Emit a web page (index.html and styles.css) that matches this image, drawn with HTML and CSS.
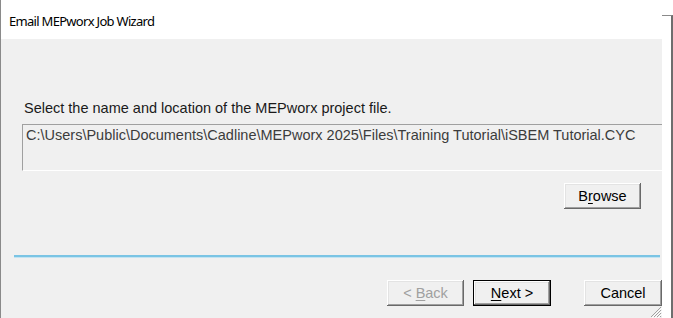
FILE: index.html
```html
<!DOCTYPE html>
<html>
<head>
<meta charset="utf-8">
<link rel="stylesheet" href="styles.css">
</head>
<body>
<div class="screen">
  <div class="dialog">
    <div class="titlebar">Email MEPworx Job Wizard</div>
    <div class="content">
      <div class="label">Select the name and location of the MEPworx project file.</div>
      <div class="pathbox">C:\Users\Public\Documents\Cadline\MEPworx 2025\Files\Training Tutorial\iSBEM Tutorial.CYC</div>
      <div class="browse-row">
        <button class="btn">B<u>r</u>owse</button>
      </div>
      <div class="separator"></div>
      <div class="nav-row">
        <button class="btn disabled">&lt; <u>B</u>ack</button>
        <button class="btn default"><u>N</u>ext &gt;</button>
        <button class="btn cancel">Cancel</button>
      </div>
      <svg class="grip" width="12" height="12" viewBox="0 0 12 12">
        <path d="M11 1 L1 11 M11 4 L4 11 M11 7 L7 11 M11 10 L10 11" stroke="#a0a0a0" stroke-width="1" fill="none"/>
        <path d="M12 2 L2 12 M12 5 L5 12 M12 8 L8 12" stroke="#ffffff" stroke-width="1" fill="none"/>
      </svg>
    </div>
  </div>
  <div class="behind"></div>
</div>
</body>
</html>
```

FILE: styles.css
```css
html, body {
  margin: 0;
  padding: 0;
  background: #ffffff;
}
.screen {
  width: 673px;
  height: 318px;
  display: flex;
  overflow: hidden;
}
.dialog {
  width: 661px;
  height: 318px;
  border-left: 1px solid #8a8a8a;
  display: flex;
  flex-direction: column;
  overflow: hidden;
}
.titlebar {
  height: 39px;
  flex: none;
  background: #ffffff;
  font-family: "Noto Sans", "Open Sans", sans-serif;
  font-size: 13px;
  letter-spacing: -0.7px;
  color: #000;
  padding-left: 8px;
  padding-top: 3px;
  line-height: 36px;
  box-sizing: border-box;
}
.content {
  position: relative;
  flex: 1;
  background: #f0f0f0;
  font-family: "Liberation Sans", Arial, sans-serif;
  font-size: 14.5px;
  color: #000;
  display: flex;
  flex-direction: column;
  padding-top: 61px;
}
.label {
  padding-left: 23px;
  line-height: 17px;
  height: 17px;
  color: #1a1a1a;
}
.pathbox {
  margin-top: 7px;
  margin-left: 21px;
  width: 660px;
  height: 47px;
  border-top: 1px solid #a0a0a0;
  border-left: 1px solid #a0a0a0;
  border-bottom: 1px solid #ffffff;
  box-sizing: border-box;
  padding: 2px 0 0 3px;
  line-height: 17px;
  color: #3c3c3c;
  white-space: nowrap;
}
.browse-row {
  display: flex;
  justify-content: flex-end;
  padding-right: 21px;
  margin-top: 12px;
}
.btn {
  width: 77px;
  height: 26px;
  padding: 0;
  margin: 0;
  border: none;
  background: #f0f0f0;
  font-family: "Liberation Sans", Arial, sans-serif;
  font-size: 14.5px;
  color: #000;
  box-shadow: inset -1px -1px #696969, inset 1px 1px #ffffff, inset -2px -2px #a0a0a0, inset 2px 2px #e3e3e3;
}
.btn u {
  text-decoration-thickness: 1px;
  text-underline-offset: 2px;
}
.btn.disabled {
  color: #a0a0a0;
}
.btn.default {
  width: 78px;
  border: 1px solid #000;
  margin-left: 9px;
}
.btn.cancel {
  width: 78px;
  margin-left: 33px;
}
.separator {
  margin-top: 46px;
  margin-left: 13px;
  width: 646px;
  height: 2px;
  background: #7ac4e4;
  box-shadow: 0 1px 0 #c3e4f2;
}
.nav-row {
  display: flex;
  padding-left: 386px;
  margin-top: 23px;
}
.grip {
  position: absolute;
  right: 0;
  bottom: 0;
}
.behind {
  flex: 1;
  margin-top: 15px;
  border-top: 1px solid #8a8a8a;
  border-right: 2px solid #6e6e6e;
  background: #ffffff;
}
```
